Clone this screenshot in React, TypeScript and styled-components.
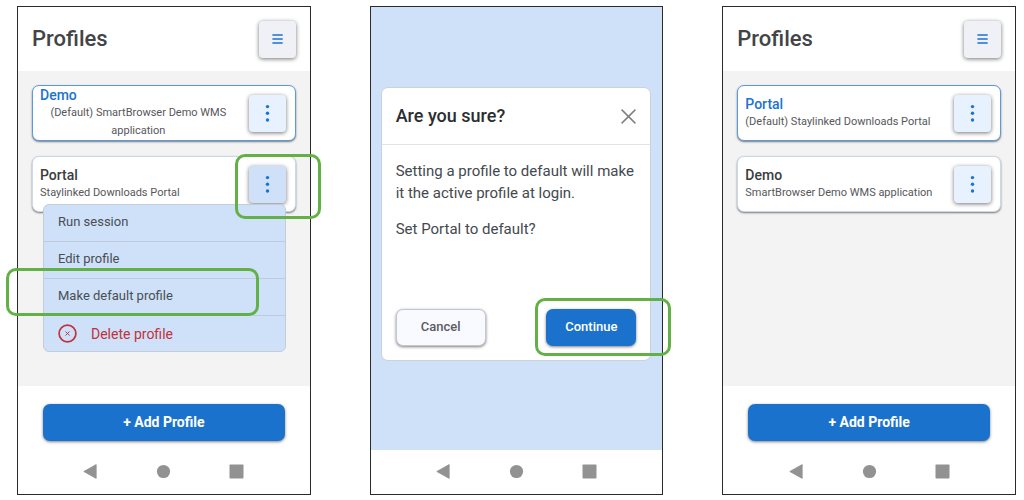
import React from 'react';
import styled, { createGlobalStyle, css } from 'styled-components';

const GlobalStyle = createGlobalStyle`
  *, *::before, *::after { box-sizing: border-box; }
  body {
    margin: 0;
    background: #ffffff;
    color: #3c4043;
    font-family: Roboto, "Liberation Sans", sans-serif;
  }
  button { font-family: inherit; cursor: pointer; }
  h1, h2, h3, p, ul { margin: 0; padding: 0; }
`;

const Page = styled.main`
  display: grid;
  grid-template-columns: repeat(3, minmax(0, 1fr));
  column-gap: 59px;
  align-items: start;
  padding: 6px 8px 5px 17px;
`;

const Phone = styled.section`
  border: 1px solid #2b2b2b;
  background: #ffffff;
`;

const Header = styled.header`
  display: flex;
  align-items: center;
  justify-content: space-between;
  height: 64px;
  padding: 0 14px;
`;

const ScreenTitle = styled.h1`
  font-size: 22px;
  line-height: 28px;
  font-weight: 500;
  color: #424446;
`;

type Tone = 'gray' | 'pale' | 'active';

const toneColors: Record<Tone, string> = {
  gray: '#f0f1f6',
  pale: '#e7f2fe',
  active: '#cee1f9',
};

const IconButton = styled.button<{ $tone: Tone }>`
  display: flex;
  align-items: center;
  justify-content: center;
  flex: none;
  width: 37px;
  height: 37px;
  padding: 0;
  border: 0;
  border-radius: 4px;
  background: ${(p) => toneColors[p.$tone]};
  color: #1b73d0;
  box-shadow: 0 1px 4px rgba(0, 0, 0, 0.55);
`;

const List = styled.ul`
  display: flex;
  flex-direction: column;
  gap: 15px;
  min-height: 315px;
  padding: 14px;
  list-style: none;
  background: #f3f3f3;
`;

const Card = styled.li<{ $selected?: boolean }>`
  position: relative;
  display: flex;
  align-items: center;
  gap: 12px;
  height: 56px;
  padding: 0 9px 0 7px;
  border: 1px solid ${(p) => (p.$selected ? '#5c9ade' : '#cbd8e6')};
  border-radius: 7px;
  background: #ffffff;
  box-shadow: 0 1px 2px rgba(0, 0, 0, 0.5);
`;

const CardText = styled.div`
  display: flex;
  flex: 1;
  flex-direction: column;
  align-items: flex-start;
  min-width: 0;
`;

const CardTitle = styled.h2<{ $selected?: boolean }>`
  font-size: 14px;
  line-height: 17px;
  font-weight: 500;
  color: ${(p) => (p.$selected ? '#1b73d0' : '#3a3c3e')};
`;

const CardNote = styled.p`
  font-size: 11px;
  line-height: 18px;
  text-align: center;
  color: #55575a;
`;

const Anchor = styled.div`
  position: relative;
`;

const spots = {
  more: css`inset: -12px -35px -16px -14px;`,
  item: css`inset: -11px 26px -1px -38px;`,
  confirm: css`inset: -11px -35px -10px -11px;`,
};

const Highlight = styled.span<{ $spot: keyof typeof spots }>`
  position: absolute;
  z-index: 3;
  ${(p) => spots[p.$spot]}
  border: 3px solid #62b146;
  border-radius: 10px;
  pointer-events: none;
`;

const Menu = styled.div`
  position: absolute;
  z-index: 2;
  top: 47px;
  left: 10px;
  right: 9px;
  border: 1px solid #c3ccd8;
  border-radius: 6px;
  background: #cee1f9;
`;

const MenuItem = styled.button<{ $danger?: boolean }>`
  position: relative;
  display: flex;
  align-items: center;
  gap: 14px;
  width: 100%;
  height: ${(p) => (p.$danger ? '35px' : '37px')};
  padding: 0 14px ${(p) => (p.$danger ? '0' : '2px')};
  border: 0;
  border-bottom: ${(p) => (p.$danger ? '0' : '1px solid #bfcbdc')};
  background: transparent;
  font-size: ${(p) => (p.$danger ? '14px' : '13px')};
  line-height: 18px;
  text-align: left;
  color: ${(p) => (p.$danger ? '#c0323c' : '#4a4e54')};
`;

const Footer = styled.footer`
  padding: 18px 25px 9px;
`;

const PrimaryButton = styled.button<{ $wide?: boolean }>`
  display: block;
  width: ${(p) => (p.$wide ? '100%' : '90px')};
  height: 37px;
  padding: 0 0 2px;
  border: 0;
  border-radius: 7px;
  background: #1b72cd;
  color: #ffffff;
  font-size: ${(p) => (p.$wide ? '14px' : '13px')};
  font-weight: ${(p) => (p.$wide ? 700 : 500)};
  box-shadow: 0 1px 3px rgba(0, 0, 0, 0.5);
`;

const SecondaryButton = styled(PrimaryButton)`
  border: 1px solid #c4c7cc;
  background: #f8faff;
  color: #5a5c5f;
`;

const NavBar = styled.nav`
  display: flex;
  align-items: center;
  justify-content: center;
  gap: 58px;
  height: 44px;
  padding-bottom: 1px;
`;

const NavButton = styled.button`
  display: flex;
  padding: 0;
  border: 0;
  background: transparent;
  color: #929292;
`;

const Backdrop = styled.div`
  min-height: 443px;
  padding: 80px 11px 80px 10px;
  background: #cee1f9;
`;

const Dialog = styled.div`
  border: 1px solid #c9d3df;
  border-radius: 7px;
  background: #ffffff;
`;

const DialogHeader = styled.div`
  display: flex;
  align-items: center;
  justify-content: space-between;
  height: 57px;
  padding: 0 14px;
  border-bottom: 1px solid #e1e3e6;
`;

const DialogTitle = styled.h2`
  font-size: 18px;
  line-height: 24px;
  font-weight: 500;
  color: #2b2e31;
`;

const CloseButton = styled.button`
  display: flex;
  padding: 0;
  border: 0;
  background: transparent;
  color: #808080;
`;

const DialogBody = styled.div`
  display: flex;
  flex-direction: column;
  gap: 14px;
  min-height: 164px;
  padding: 15px 14px;
  font-size: 15px;
  line-height: 22px;
  color: #44494e;
`;

const DialogActions = styled.div`
  display: flex;
  justify-content: space-between;
  padding: 0 14px 14px;
`;

const HamburgerIcon = () => (
  <svg width="13" height="13" viewBox="0 0 13 13" stroke="currentColor" strokeWidth="1.4" strokeLinecap="round" aria-hidden="true">
    <path d="M1.9 2H11.2M1.9 6H11.2M1.9 10H11.2" />
  </svg>
);

const DotsIcon = () => (
  <svg width="7" height="19" viewBox="0 0 7 19" fill="currentColor" aria-hidden="true">
    <circle cx="3.5" cy="2.6" r="1.7" />
    <circle cx="3.5" cy="9.3" r="1.7" />
    <circle cx="3.5" cy="16" r="1.7" />
  </svg>
);

const DeleteIcon = () => (
  <svg width="19" height="19" viewBox="0 0 19 19" fill="none" stroke="currentColor" aria-hidden="true">
    <circle cx="9.5" cy="9.5" r="8.4" strokeWidth="1.7" />
    <path d="M7.5 7.5l4 4M11.5 7.5l-4 4" strokeWidth="1" />
  </svg>
);

const CloseIcon = () => (
  <svg width="15" height="15" viewBox="0 0 15 15" fill="none" stroke="currentColor" strokeWidth="1.5" aria-hidden="true">
    <path d="M0.6 0.6L14.4 14.4M14.4 0.6L0.6 14.4" />
  </svg>
);

const navShapes = [
  { label: 'Back', shape: <path d="M0.8 7.5L13.2 0.6V14.4Z" strokeWidth="0.8" strokeLinejoin="round" stroke="currentColor" /> },
  { label: 'Home', shape: <circle cx="7.5" cy="7.5" r="6.6" /> },
  { label: 'Recent apps', shape: <rect x="0.5" y="0.5" width="14" height="14" rx="0.8" /> },
];

const SystemNav = () => (
  <NavBar aria-label="System navigation">
    {navShapes.map(({ label, shape }) => (
      <NavButton key={label} type="button" aria-label={label}>
        <svg width="15" height="15" viewBox="0 0 15 15" fill="currentColor" aria-hidden="true">
          {shape}
        </svg>
      </NavButton>
    ))}
  </NavBar>
);

interface Profile {
  name: string;
  note: string;
  selected?: boolean;
  menuOpen?: boolean;
}

const ProfileMenu = () => (
  <Menu>
    <MenuItem type="button">Run session</MenuItem>
    <MenuItem type="button">Edit profile</MenuItem>
    <MenuItem type="button">
      Make default profile
      <Highlight $spot="item" />
    </MenuItem>
    <MenuItem type="button" $danger>
      <DeleteIcon />
      Delete profile
    </MenuItem>
  </Menu>
);

const ProfileCard = ({ name, note, selected, menuOpen }: Profile) => (
  <Card $selected={selected}>
    <CardText>
      <CardTitle $selected={selected}>{name}</CardTitle>
      <CardNote>{note}</CardNote>
    </CardText>
    <Anchor>
      <IconButton type="button" $tone={menuOpen ? 'active' : 'pale'} aria-label={`${name} options`} aria-expanded={!!menuOpen}>
        <DotsIcon />
      </IconButton>
      {menuOpen && <Highlight $spot="more" />}
    </Anchor>
    {menuOpen && <ProfileMenu />}
  </Card>
);

const ProfilesScreen = ({ profiles }: { profiles: Profile[] }) => (
  <Phone>
    <Header>
      <ScreenTitle>Profiles</ScreenTitle>
      <IconButton type="button" $tone="gray" aria-label="Menu">
        <HamburgerIcon />
      </IconButton>
    </Header>
    <List>
      {profiles.map((profile) => (
        <ProfileCard key={profile.name} {...profile} />
      ))}
    </List>
    <Footer>
      <PrimaryButton type="button" $wide>+ Add Profile</PrimaryButton>
    </Footer>
    <SystemNav />
  </Phone>
);

const ConfirmScreen = () => (
  <Phone>
    <Backdrop>
      <Dialog role="dialog" aria-labelledby="confirm-title">
        <DialogHeader>
          <DialogTitle id="confirm-title">Are you sure?</DialogTitle>
          <CloseButton type="button" aria-label="Close">
            <CloseIcon />
          </CloseButton>
        </DialogHeader>
        <DialogBody>
          <p>Setting a profile to default will make it the active profile at login.</p>
          <p>Set Portal to default?</p>
        </DialogBody>
        <DialogActions>
          <SecondaryButton type="button">Cancel</SecondaryButton>
          <Anchor>
            <PrimaryButton type="button">Continue</PrimaryButton>
            <Highlight $spot="confirm" />
          </Anchor>
        </DialogActions>
      </Dialog>
    </Backdrop>
    <SystemNav />
  </Phone>
);

const before: Profile[] = [
  { name: 'Demo', note: '(Default) SmartBrowser Demo WMS application', selected: true },
  { name: 'Portal', note: 'Staylinked Downloads Portal', menuOpen: true },
];

const after: Profile[] = [
  { name: 'Portal', note: '(Default) Staylinked Downloads Portal', selected: true },
  { name: 'Demo', note: 'SmartBrowser Demo WMS application' },
];

export default function App() {
  return (
    <>
      <GlobalStyle />
      <Page>
        <ProfilesScreen profiles={before} />
        <ConfirmScreen />
        <ProfilesScreen profiles={after} />
      </Page>
    </>
  );
}
